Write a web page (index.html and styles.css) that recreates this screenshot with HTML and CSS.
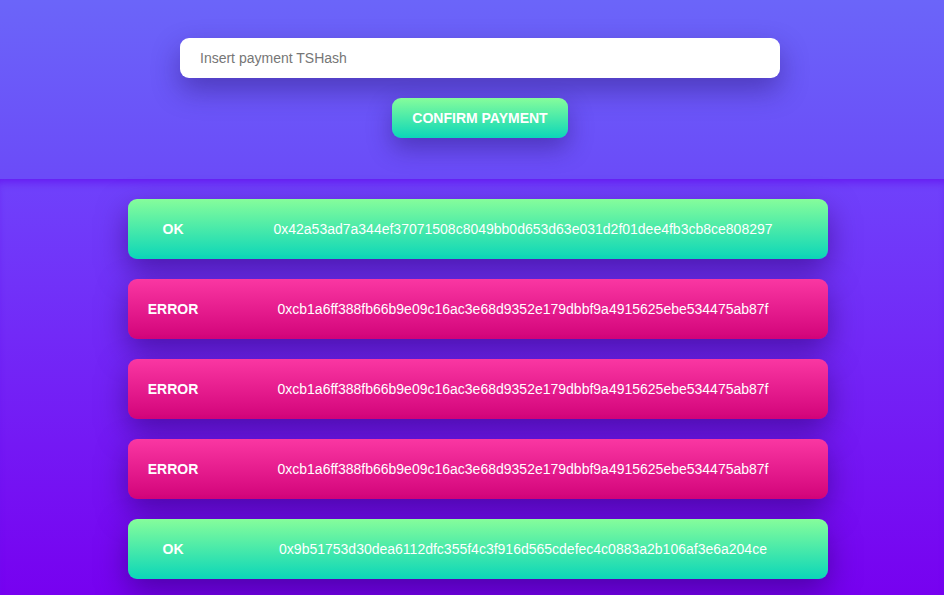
FILE: index.html
```html
<!DOCTYPE html>
<html lang="en">
<head>
<meta charset="utf-8">
<title>Payments</title>
<link rel="stylesheet" href="styles.css">
</head>
<body>
<header class="top">
  <input class="hash-input" type="text" placeholder="Insert payment TSHash">
  <button class="confirm">CONFIRM PAYMENT</button>
</header>
<main class="list">
  <div class="card ok"><span class="status">OK</span><span class="hash">0x42a53ad7a344ef37071508c8049bb0d653d63e031d2f01dee4fb3cb8ce808297</span></div>
  <div class="card err"><span class="status">ERROR</span><span class="hash">0xcb1a6ff388fb66b9e09c16ac3e68d9352e179dbbf9a4915625ebe534475ab87f</span></div>
  <div class="card err"><span class="status">ERROR</span><span class="hash">0xcb1a6ff388fb66b9e09c16ac3e68d9352e179dbbf9a4915625ebe534475ab87f</span></div>
  <div class="card err"><span class="status">ERROR</span><span class="hash">0xcb1a6ff388fb66b9e09c16ac3e68d9352e179dbbf9a4915625ebe534475ab87f</span></div>
  <div class="card ok"><span class="status">OK</span><span class="hash">0x9b51753d30dea6112dfc355f4c3f916d565cdefec4c0883a2b106af3e6a204ce</span></div>
</main>
</body>
</html>
```
FILE: styles.css
```css
* { box-sizing: border-box; }
html, body { margin: 0; padding: 0; }
body {
  font-family: "Liberation Sans", Arial, sans-serif;
  background: #7800f0;
}
.top {
  height: 179px;
  padding: 38px 0 0 16px;
  display: flex;
  flex-direction: column;
  align-items: center;
  gap: 20px;
  background: linear-gradient(to bottom, #6b65f9 0%, #6b4bf8 100%);
}
.hash-input {
  width: 600px;
  height: 40px;
  border: none;
  border-radius: 9px;
  background: #fff;
  padding: 0 20px;
  font-family: "Liberation Sans", Arial, sans-serif;
  font-size: 14px;
  color: #333;
  outline: none;
  box-shadow: 0 12px 28px rgba(40, 20, 110, 0.45);
}
.hash-input::placeholder { color: #767676; }
.confirm {
  height: 40px;
  padding: 0 20px;
  border: none;
  border-radius: 9px;
  background: linear-gradient(to bottom, #86fd9b 0%, #0bd6b9 100%);
  color: #fff;
  font-family: "Liberation Sans", Arial, sans-serif;
  font-weight: bold;
  font-size: 14px;
  box-shadow: 0 10px 24px rgba(40, 20, 110, 0.45);
}
.list {
  display: flex;
  flex-direction: column;
  align-items: center;
  gap: 20px;
  padding: 20px 0 20px 12px;
  min-height: 416px;
  background: linear-gradient(to bottom, #6f42fb 0%, #7700f0 100%);
  box-shadow: inset 0 7px 8px -4px rgba(100, 20, 240, 0.9);
}
.card {
  width: 700px;
  height: 60px;
  border-radius: 9px;
  display: flex;
  align-items: center;
  color: #fff;
  font-size: 14px;
  box-shadow: 0 12px 30px rgba(45, 0, 110, 0.55);
}
.card.ok { background: linear-gradient(to bottom, #86fd9b 0%, #0bd6b9 100%); }
.card.err { background: linear-gradient(to bottom, #fa37a2 0%, #d2037a 100%); }
.status {
  width: 90px;
  text-align: center;
  font-weight: bold;
}
.hash {
  flex: 1;
  text-align: center;
}
```
